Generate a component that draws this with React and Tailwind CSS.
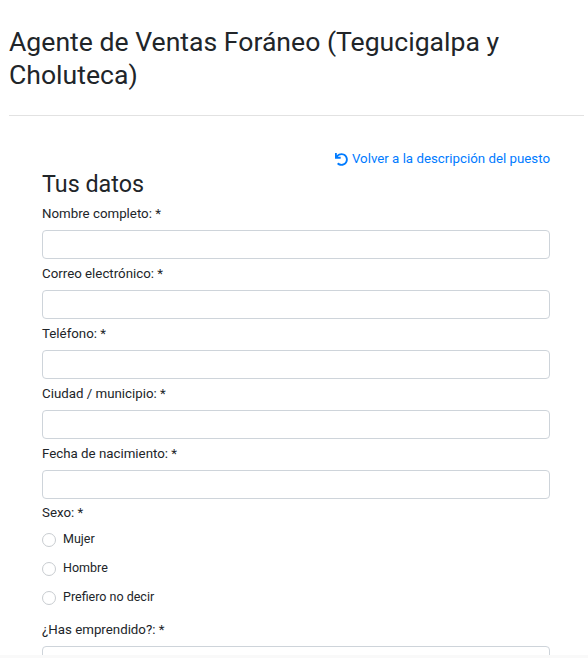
import { FaUndo } from "react-icons/fa";

const fields = ["Nombre completo: *", "Correo electrónico: *", "Teléfono: *", "Ciudad / municipio: *", "Fecha de nacimiento: *"];
const options = ["Mujer", "Hombre", "Prefiero no decir"];

export default function App() {
  return (
    <div className="h-[658px] overflow-hidden bg-[#f9f9f9] font-['Roboto',sans-serif] text-[#212529]">
      <div className="h-[655px] overflow-hidden bg-white pl-[9px] pr-[4px]">
        <h1 className="pt-[25px] pb-[24px] text-[26.6px] leading-[33px] border-b border-[#e2e2e2]">
          Agente de Ventas Foráneo (Tegucigalpa y Choluteca)
        </h1>
        <div className="pl-[33px] pr-[34px]">
          <div className="flex justify-end items-center gap-[4px] mt-[35px] text-[13.3px] leading-[16px] text-[#007bff]">
            <FaUndo className="w-[13px] h-[13px]" />
            <a>Volver a la descripción del puesto</a>
          </div>
          <h3 className="text-[23.3px] leading-[29px] mt-[3px]">Tus datos</h3>
          {fields.map((f) => (
            <div key={f} className="mt-[7px] mb-[1px]">
              <label className="block text-[13.3px] leading-[16px] mb-[8px]">{f}</label>
              <input className="block w-full h-[29px] rounded-[4px] border border-[#ced4da]" />
            </div>
          ))}
          <div className="mt-[6px] text-[13.3px] leading-[16px]">Sexo: *</div>
          <div className="mt-[4px]">
            {options.map((o) => (
              <div key={o} className="flex items-center h-[29px] text-[12.5px]">
                <span className="w-[14px] h-[14px] rounded-full border border-[#c8ccd0] bg-white" />
                <span className="ml-[7px]">{o}</span>
              </div>
            ))}
          </div>
          <div className="mt-[10px] text-[13.3px] leading-[16px]">¿Has emprendido?: *</div>
          <div className="mt-[8px] h-[29px] rounded-[4px] border border-[#ced4da]" />
        </div>
      </div>
    </div>
  );
}
